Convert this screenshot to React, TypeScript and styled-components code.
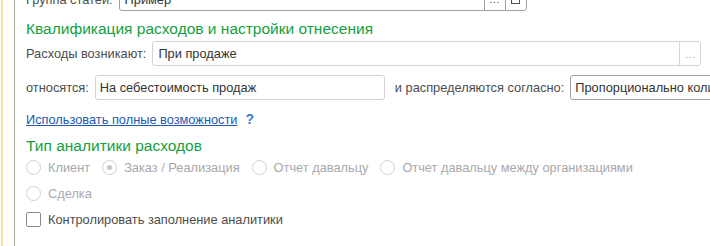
import styled, { createGlobalStyle } from 'styled-components'

const Global = createGlobalStyle`
  html, body {
    margin: 0;
    padding: 0;
    background: #fff;
    overflow: hidden;
  }
  body {
    font-family: "Liberation Sans", Arial, sans-serif;
    font-size: 12.8px;
    color: #4d4d4d;
  }
`

const App = () => {
  const radios = [
    { label: 'Клиент', checked: false },
    { label: 'Заказ / Реализация', checked: true },
    { label: 'Отчет давальцу', checked: false },
    { label: 'Отчет давальцу между организациями', checked: false },
  ]
  return (
    <>
      <Global />
      <Page>
        <Panel>
          <Row $height={24} style={{ marginTop: -13 }}>
            <Label>Группа статей:</Label>
            <Field $width={408} $dark>
              <FieldText>Пример</FieldText>
              <FieldButton $dark>...</FieldButton>
              <FieldButton $dark>
                <OpenIcon />
              </FieldButton>
            </Field>
          </Row>

          <Heading $top={8}>Квалификация расходов и настройки отнесения</Heading>

          <Row $height={25} $top={2}>
            <Label>Расходы возникают:</Label>
            <Field $width={549}>
              <FieldText>При продаже</FieldText>
              <FieldButton $light>...</FieldButton>
            </Field>
          </Row>

          <Row $height={25} $top={9}>
            <Label>относятся:</Label>
            <Field $width={290}>
              <FieldText $pad={4}>На себестоимость продаж</FieldText>
            </Field>
            <Label $left={10}>и распределяются согласно:</Label>
            <Field $width={200} $dark $open>
              <FieldText $pad={4}>Пропорционально количеству</FieldText>
            </Field>
          </Row>

          <LinkRow>
            <Link>Использовать полные возможности</Link>
            <Help>?</Help>
          </LinkRow>

          <Heading $top={9}>Тип аналитики расходов</Heading>

          <RadioGroup>
            {radios.map((r) => (
              <RadioItem key={r.label}>
                <RadioCircle $checked={r.checked} />
                <DisabledText>{r.label}</DisabledText>
              </RadioItem>
            ))}
            <RadioItem>
              <RadioCircle />
              <DisabledText>Сделка</DisabledText>
            </RadioItem>
          </RadioGroup>

          <CheckRow>
            <CheckBox />
            <span>Контролировать заполнение аналитики</span>
          </CheckRow>
        </Panel>
      </Page>
    </>
  )
}

const OpenIcon = () => (
  <svg width="9" height="9" viewBox="0 0 9 9">
    <rect x="0.5" y="0.5" width="8" height="8" fill="none" stroke="#555" />
    <line x1="0" y1="2.5" x2="9" y2="2.5" stroke="#555" />
  </svg>
)

const Page = styled.div`
  width: 710px;
  height: 246px;
  box-sizing: border-box;
  border-left: 2px solid #f3e49c;
  margin-left: 1px;
  padding-left: 11px;
  overflow: hidden;
`

const Panel = styled.div`
  height: 100%;
  border-left: 1px solid #a8a8a8;
  padding-left: 11px;
  display: flex;
  flex-direction: column;
`

const Row = styled.div<{ $height: number; $top?: number }>`
  display: flex;
  align-items: center;
  height: ${(p) => p.$height}px;
  margin-top: ${(p) => p.$top ?? 0}px;
  white-space: nowrap;
`

const Label = styled.span<{ $left?: number }>`
  margin-left: ${(p) => p.$left ?? 0}px;
  margin-right: 6px;
  color: #4d4d4d;
`

const Field = styled.div<{ $width: number; $dark?: boolean; $open?: boolean }>`
  display: flex;
  align-items: stretch;
  flex-shrink: 0;
  box-sizing: border-box;
  width: ${(p) => p.$width}px;
  height: 100%;
  border: 1px solid ${(p) => (p.$dark ? '#a0a0a0' : '#d2d2d2')};
  border-radius: ${(p) => (p.$open ? '3px 0 0 3px' : '3px')};
  background: #fff;
  overflow: hidden;
`

const FieldText = styled.span<{ $pad?: number }>`
  flex: 1;
  display: flex;
  align-items: center;
  padding-left: ${(p) => p.$pad ?? 5}px;
  color: #333;
  overflow: hidden;
`

const FieldButton = styled.span<{ $dark?: boolean; $light?: boolean }>`
  width: 20px;
  display: flex;
  align-items: center;
  justify-content: center;
  border-left: 1px solid ${(p) => (p.$dark ? '#a0a0a0' : '#d8d8d8')};
  color: ${(p) => (p.$light ? '#aaa' : '#555')};
  font-size: 11px;
  letter-spacing: 0.5px;
`

const Heading = styled.div<{ $top?: number }>`
  margin-top: ${(p) => p.$top ?? 0}px;
  height: 20px;
  line-height: 20px;
  font-size: 15.5px;
  color: #13a03e;
  white-space: nowrap;
`

const LinkRow = styled.div`
  display: flex;
  align-items: center;
  height: 16px;
  margin-top: 11px;
`

const Link = styled.a`
  color: #1d5aab;
  text-decoration: underline;
  cursor: pointer;
`

const Help = styled.span`
  margin-left: 8px;
  color: #3a7fd0;
  font-size: 14px;
  font-weight: bold;
`

const RadioGroup = styled.div`
  display: flex;
  flex-wrap: wrap;
  width: 640px;
  row-gap: 11px;
  margin-top: 4px;
`

const RadioItem = styled.label`
  display: flex;
  align-items: center;
  height: 15px;
  margin-right: 12px;
  white-space: nowrap;
`

const RadioCircle = styled.span<{ $checked?: boolean }>`
  position: relative;
  width: 13px;
  height: 13px;
  border: 1px solid #d0d0d0;
  border-radius: 50%;
  margin-right: 7px;
  background: #fff;
  &::after {
    content: '';
    display: ${(p) => (p.$checked ? 'block' : 'none')};
    position: absolute;
    left: 4px;
    top: 4px;
    width: 5px;
    height: 5px;
    border-radius: 50%;
    background: #c4c4c4;
  }
`

const DisabledText = styled.span`
  color: #a9a9ad;
`

const CheckRow = styled.label`
  display: flex;
  align-items: center;
  height: 15px;
  margin-top: 11px;
  white-space: nowrap;
  color: #4d4d4d;
`

const CheckBox = styled.span`
  width: 13px;
  height: 13px;
  border: 1px solid #8a8a8a;
  border-radius: 2px;
  margin-right: 7px;
  background: #fff;
`

export default App
